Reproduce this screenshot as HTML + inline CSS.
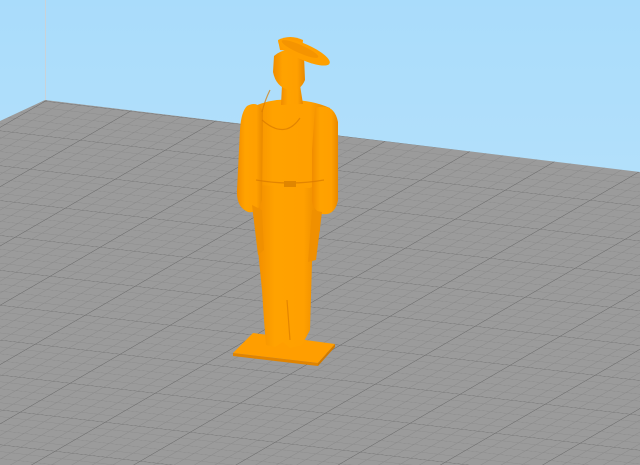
<!DOCTYPE html>
<html><head><style>html,body{margin:0;padding:0;background:#bce3fb}svg{display:block}</style></head>
<body>
<svg width="640" height="465" viewBox="0 0 640 465" xmlns="http://www.w3.org/2000/svg">
<defs>
<linearGradient id="sky" x1="0" y1="0" x2="0" y2="1"><stop offset="0" stop-color="#a9dcfb"/><stop offset="1" stop-color="#c2e6fb"/></linearGradient>
<pattern id="grid" width="10" height="10" patternUnits="userSpaceOnUse" patternTransform="matrix(8.5,1,-5,2.9,45,101)">
<rect width="10" height="10" fill="#9b9b9b"/>
<g stroke="#8a8a8a" stroke-width="0.1">
<line x1="2" y1="0" x2="2" y2="10"/><line x1="4" y1="0" x2="4" y2="10"/><line x1="6" y1="0" x2="6" y2="10"/><line x1="8" y1="0" x2="8" y2="10"/>
<line y1="2" x1="0" y2="2" x2="10"/><line y1="4" x1="0" y2="4" x2="10"/><line y1="6" x1="0" y2="6" x2="10"/><line y1="8" x1="0" y2="8" x2="10"/>
</g>
<g stroke="#6f6f6f" stroke-width="0.22"><line x1="0" y1="0" x2="0" y2="10"/><line y1="0" x1="0" y2="0" x2="10"/></g>
</pattern>
<linearGradient id="org" x1="0" y1="0" x2="1" y2="0"><stop offset="0" stop-color="#f08c00"/><stop offset="0.3" stop-color="#ffa200"/><stop offset="0.75" stop-color="#ffa000"/><stop offset="1" stop-color="#e88800"/></linearGradient>
</defs>
<rect width="640" height="465" fill="url(#sky)"/>
<line x1="45.5" y1="0" x2="45.5" y2="101" stroke="#c8d3da" stroke-width="1"/>
<polygon points="0,121 45,100 640,172 640,465 0,465" fill="url(#grid)"/>
<g fill="url(#org)">
<polygon points="233,353 253,333 335,344 318,363" fill="#ff9e00"/>
<polygon points="233,353 318,363 318,366 233,356" fill="#e08400"/>
<polygon points="318,363 335,344 335,347 318,366" fill="#d07a00"/>
<path d="M255,182 L318,185 L320,230 L312,262 L310,330 L302,345 L290,348 L283,342 L275,347 L266,345 L264,320 L262,290 L258,250 Z"/>
<path d="M250,108 Q272,98 290,100 Q312,100 330,108 L326,180 L310,188 L258,185 L248,170 Z"/>
<path d="M247,106 Q258,100 263,112 L262,200 Q258,214 248,212 Q236,207 237,190 L240,130 Q241,112 247,106 Z"/>
<path d="M315,108 Q334,102 338,122 L338,200 Q335,216 322,214 Q311,209 312,198 L312,150 Z"/>
<path d="M252,205 L262,210 L264,250 L258,255 Z" fill="#f09000"/>
<path d="M312,210 L322,212 L316,260 L308,262 Z" fill="#f09000"/>
<path d="M282,85 L300,85 L303,104 L281,105 Z"/>
<path d="M274,56 Q288,44 304,56 L305,80 Q300,92 289,90 Q276,87 273,72 Z"/>
<path d="M278,40 Q290,34 303,40 L302,52 L280,50 Z" fill="#ff9c00"/>
<ellipse cx="304" cy="52" rx="28" ry="8" transform="rotate(24 304 52)" fill="#ffa000"/>
<ellipse cx="300" cy="49" rx="20" ry="4" transform="rotate(24 300 49)" fill="#f59400"/>
</g>
<g fill="none" stroke="#d87a00" stroke-width="1.2" opacity="0.7">
<path d="M256,180 Q290,186 324,180"/>
<path d="M262,120 Q285,140 300,118"/>
<path d="M287,300 L290,340"/>
<path d="M270,90 Q265,100 262,112"/>
</g>
<rect x="284" y="181" width="12" height="6" fill="#e08600"/>
</svg>
</body></html>
